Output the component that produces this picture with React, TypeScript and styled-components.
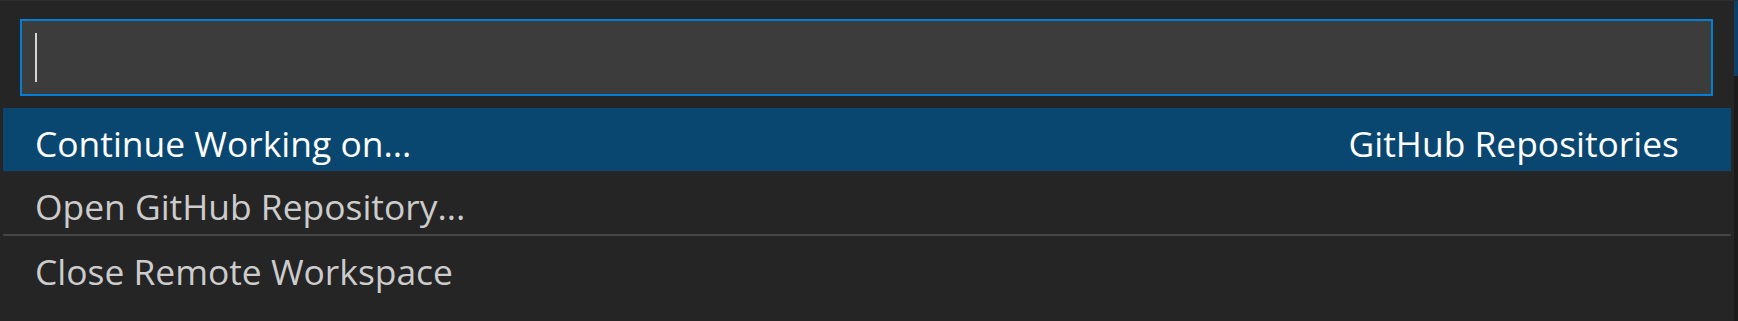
import { createGlobalStyle } from "styled-components";
import styled from "styled-components";

const GlobalStyle = createGlobalStyle`
  html, body {
    margin: 0;
    padding: 0;
    background: #252526;
  }
  body {
    font-family: "Open Sans", "Noto Sans", "Liberation Sans", sans-serif;
  }
`;

const Frame = styled.div`
  display: flex;
  width: 1738px;
  height: 321px;
  background: #252526;
  border-top: 1px solid #2e2e2e;
  box-sizing: border-box;
  overflow: hidden;
`;

const Picker = styled.div`
  flex: 1;
  display: flex;
  flex-direction: column;
  padding-top: 18px;
`;

const InputBox = styled.div`
  margin: 0 21px 0 20px;
  height: 77px;
  box-sizing: border-box;
  border: 2px solid #007fd4;
  background: #3c3c3c;
  display: flex;
  align-items: center;
  padding-left: 13px;
`;

const Caret = styled.span`
  display: block;
  width: 2px;
  height: 49px;
  background: #d4d4d4;
`;

const List = styled.div`
  margin: 12px 3px 0 3px;
  display: flex;
  flex-direction: column;
`;

interface RowProps {
  $active?: boolean;
}

const Row = styled.div<RowProps>`
  height: 63px;
  display: flex;
  align-items: center;
  justify-content: space-between;
  padding: 6px 52px 0 32px;
  box-sizing: border-box;
  font-size: 35.4px;
  background: ${(p) => (p.$active ? "#094771" : "transparent")};
  color: ${(p) => (p.$active ? "#ffffff" : "#cccccc")};
`;

const Detail = styled.span`
  white-space: nowrap;
`;

const Separator = styled.div`
  height: 2px;
  background: #454545;
`;

const ScrollTrack = styled.div`
  width: 4px;
  background: #1b1b1b;
  display: flex;
  flex-direction: column;
`;

const ScrollThumb = styled.div`
  height: 75px;
  background: #0b3f63;
`;

export default function App() {
  return (
    <>
      <GlobalStyle />
      <Frame>
        <Picker>
          <InputBox>
            <Caret />
          </InputBox>
          <List>
            <Row $active>
              <span>Continue Working on...</span>
              <Detail>GitHub Repositories</Detail>
            </Row>
            <Row>
              <span>Open GitHub Repository...</span>
            </Row>
            <Separator />
            <Row>
              <span>Close Remote Workspace</span>
            </Row>
          </List>
        </Picker>
        <ScrollTrack>
          <ScrollThumb />
        </ScrollTrack>
      </Frame>
    </>
  );
}
